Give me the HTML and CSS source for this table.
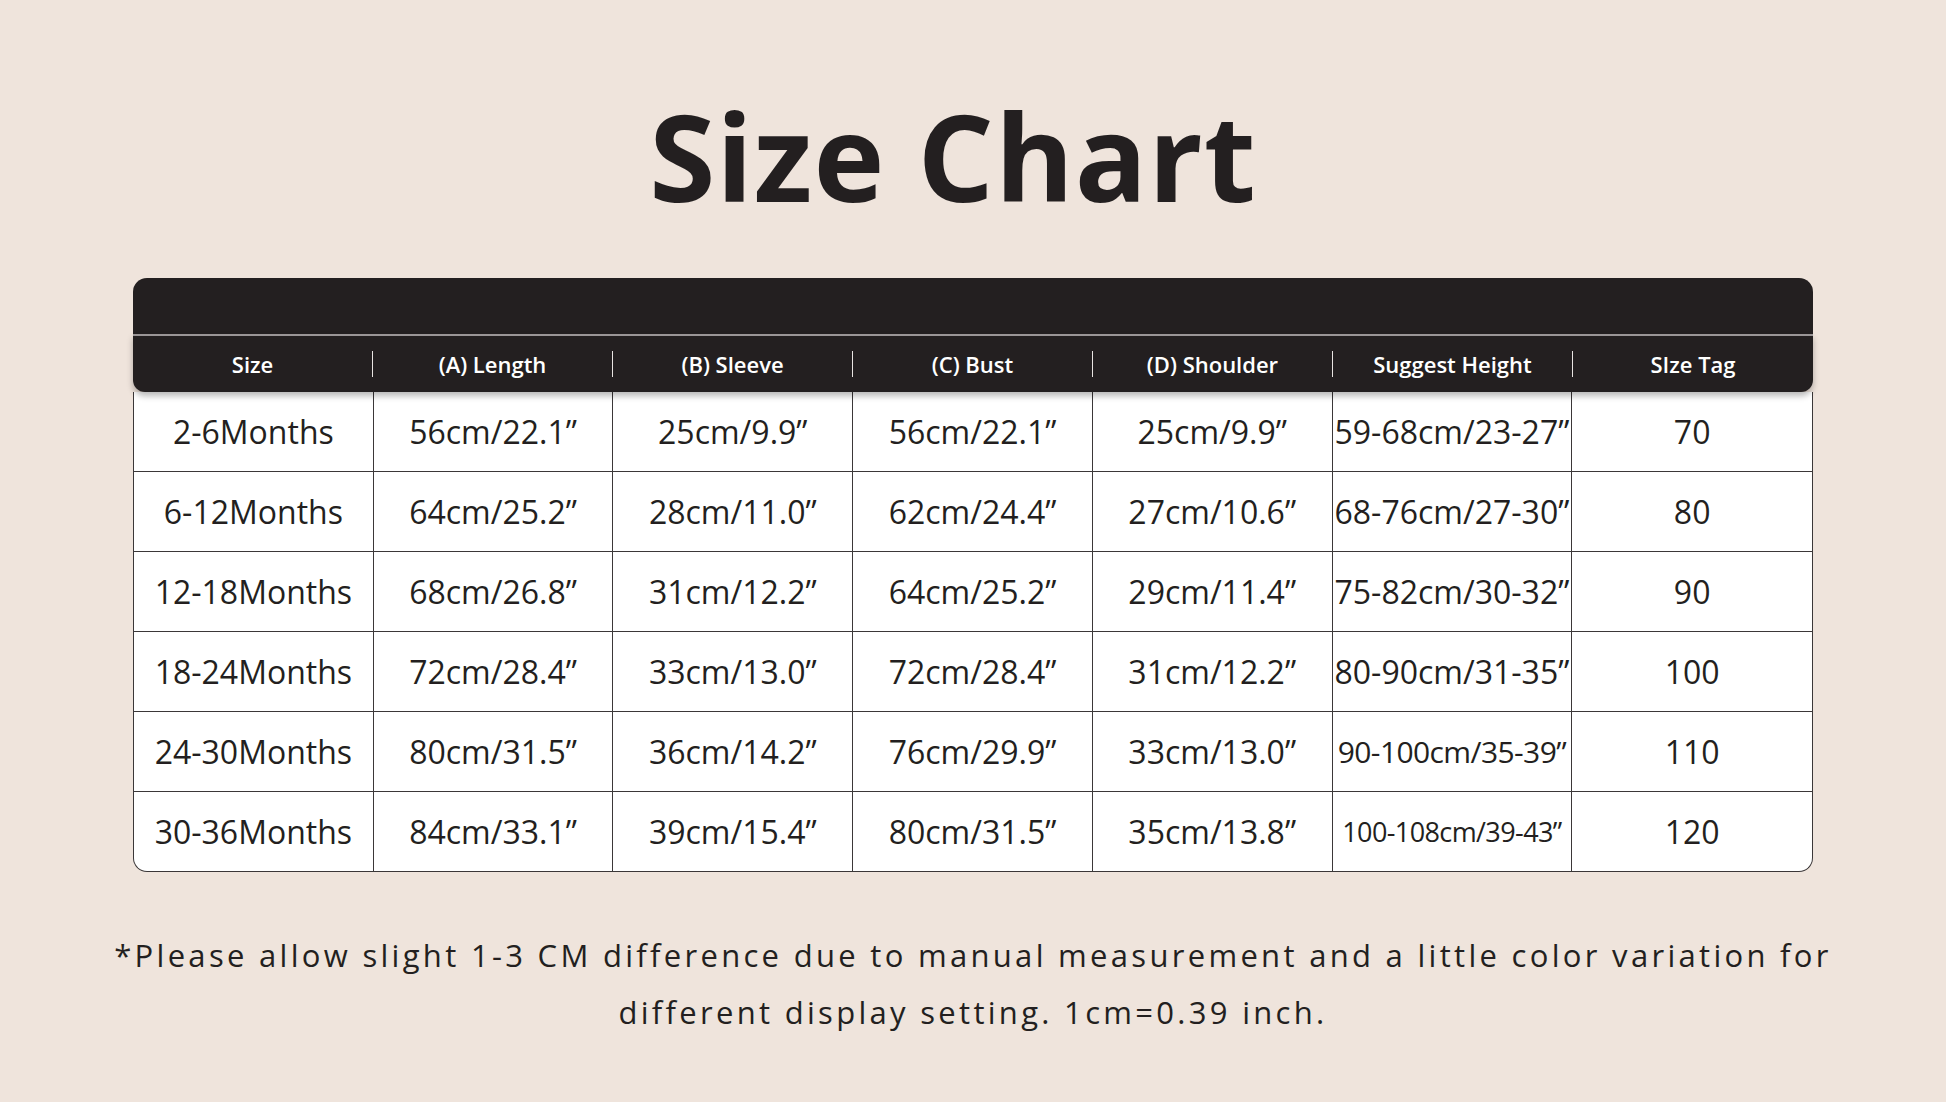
FILE: index.html
```html
<!DOCTYPE html>
<html lang="en">
<head>
<meta charset="utf-8">
<title>Size Chart</title>
<link rel="stylesheet" href="styles.css">
</head>
<body>
<main class="page">
  <h1 class="title">Size Chart</h1>
  <section class="chart">
    <div class="chart-top"></div>
    <div class="chart-head">
      <div class="hcell">Size</div>
      <div class="hcell">(A) Length</div>
      <div class="hcell">(B) Sleeve</div>
      <div class="hcell">(C) Bust</div>
      <div class="hcell">(D) Shoulder</div>
      <div class="hcell">Suggest Height</div>
      <div class="hcell last">SIze Tag</div>
    </div>
    <div class="chart-body">
      <div class="row">
        <div class="cell">2-6Months</div><div class="cell">56cm/22.1”</div><div class="cell">25cm/9.9”</div><div class="cell">56cm/22.1”</div><div class="cell">25cm/9.9”</div><div class="cell">59-68cm/23-27”</div><div class="cell">70</div>
      </div>
      <div class="row">
        <div class="cell">6-12Months</div><div class="cell">64cm/25.2”</div><div class="cell">28cm/11.0”</div><div class="cell">62cm/24.4”</div><div class="cell">27cm/10.6”</div><div class="cell">68-76cm/27-30”</div><div class="cell">80</div>
      </div>
      <div class="row">
        <div class="cell">12-18Months</div><div class="cell">68cm/26.8”</div><div class="cell">31cm/12.2”</div><div class="cell">64cm/25.2”</div><div class="cell">29cm/11.4”</div><div class="cell">75-82cm/30-32”</div><div class="cell">90</div>
      </div>
      <div class="row">
        <div class="cell">18-24Months</div><div class="cell">72cm/28.4”</div><div class="cell">33cm/13.0”</div><div class="cell">72cm/28.4”</div><div class="cell">31cm/12.2”</div><div class="cell">80-90cm/31-35”</div><div class="cell">100</div>
      </div>
      <div class="row">
        <div class="cell">24-30Months</div><div class="cell">80cm/31.5”</div><div class="cell">36cm/14.2”</div><div class="cell">76cm/29.9”</div><div class="cell">33cm/13.0”</div><div class="cell small">90-100cm/35-39”</div><div class="cell">110</div>
      </div>
      <div class="row last">
        <div class="cell">30-36Months</div><div class="cell">84cm/33.1”</div><div class="cell">39cm/15.4”</div><div class="cell">80cm/31.5”</div><div class="cell">35cm/13.8”</div><div class="cell smaller">100-108cm/39-43”</div><div class="cell">120</div>
      </div>
    </div>
  </section>
  <p class="note">*Please allow slight 1-3 CM difference due to manual measurement and a little color variation for<br>different display setting. 1cm=0.39 inch.</p>
</main>
</body>
</html>
```

FILE: styles.css
```css
html, body {
  margin: 0;
  padding: 0;
}
body {
  background: #efe4dc;
  color: #231f20;
  font-family: "Open Sans", "Liberation Sans", sans-serif;
  width: 1946px;
  height: 1102px;
  overflow: hidden;
}
.page {
  display: flex;
  flex-direction: column;
  align-items: center;
}
.title {
  margin: 91px 40px 0 0;
  font-size: 120px;
  font-weight: 700;
  line-height: 130px;
  letter-spacing: 1px;
  color: #231f20;
}
.chart {
  width: 1680px;
  margin-top: 57px;
  display: flex;
  flex-direction: column;
}
.chart-top {
  height: 56px;
  background: #231f20;
  border-radius: 14px 14px 0 0;
}
.chart-head {
  position: relative;
  z-index: 2;
  display: grid;
  grid-template-columns: repeat(7, 1fr);
  align-items: center;
  height: 56px;
  background: #231f20;
  border-top: 2px solid #9a9596;
  border-radius: 0 0 12px 12px;
  box-shadow: 0 4px 6px rgba(0, 0, 0, 0.28);
}
.hcell {
  color: #ffffff;
  text-align: center;
  font-size: 22px;
  font-weight: 600;
  border-right: 1.5px solid #e8e4e2;
  height: 26px;
  line-height: 26px;
}
.hcell.last {
  border-right: none;
}
.chart-body {
  display: flex;
  flex-direction: column;
  background: #ffffff;
  border: 1.5px solid #3b3738;
  border-top: none;
  border-radius: 0 0 14px 14px;
}
.row {
  display: grid;
  grid-template-columns: repeat(7, 1fr);
  height: 80px;
  border-bottom: 1.5px solid #3b3738;
  box-sizing: border-box;
}
.row.last {
  border-bottom: none;
  height: 79px;
}
.cell {
  display: flex;
  align-items: center;
  justify-content: center;
  font-size: 32px;
  font-weight: 400;
  color: #231f20;
  border-right: 1.5px solid #3b3738;
  white-space: nowrap;
}
.cell:last-child {
  border-right: none;
}
.cell.small {
  font-size: 30px;
  letter-spacing: -0.6px;
}
.cell.smaller {
  font-size: 27px;
  letter-spacing: -0.6px;
}
.note {
  margin: 55px 0 0;
  text-align: center;
  font-size: 31px;
  line-height: 57px;
  letter-spacing: 3.3px;
  color: #231f20;
}
```
